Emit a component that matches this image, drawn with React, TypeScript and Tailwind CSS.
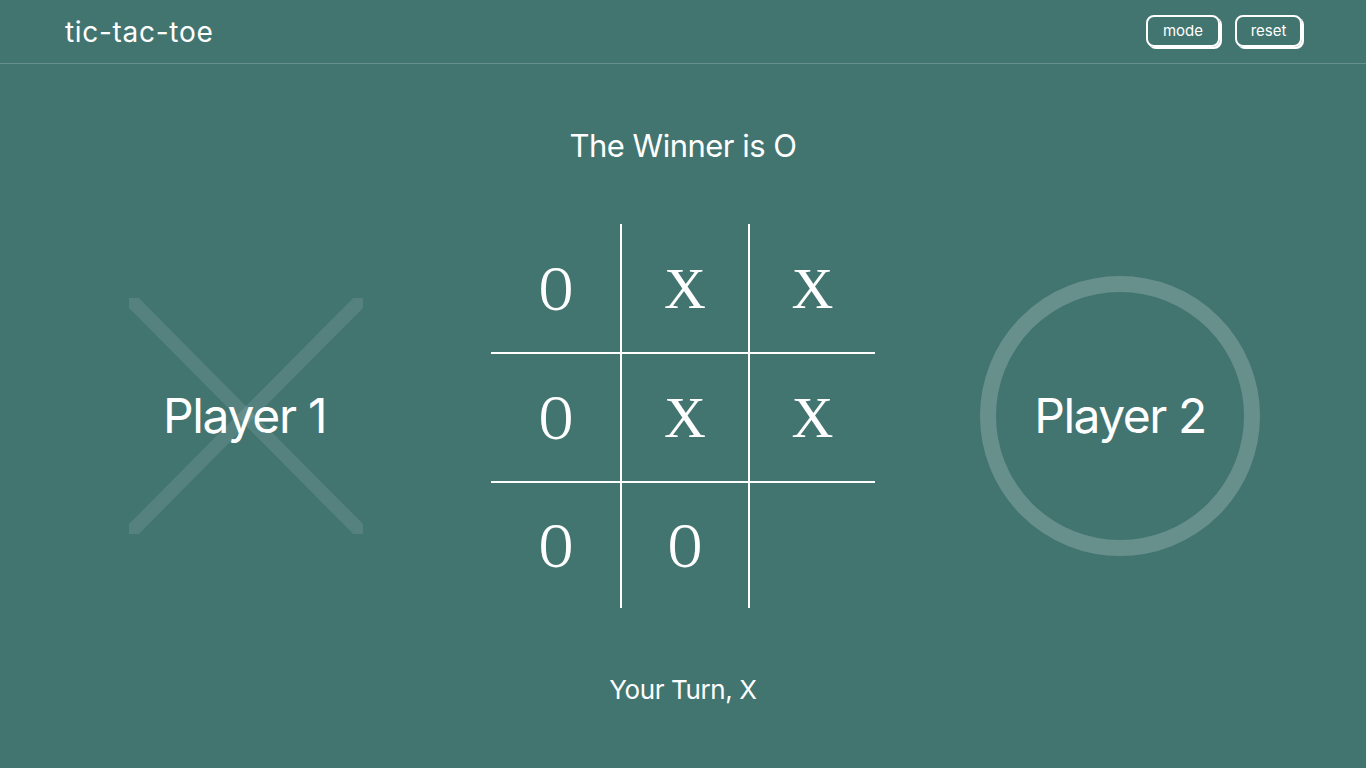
import React from "react";

const board = ["O", "X", "X", "O", "X", "X", "O", "O", ""];

export default function App() {
  return (
    <div
      className="min-h-screen w-full bg-[#427470] text-white"
      style={{ fontFamily: "Inter, 'Noto Sans', sans-serif" }}
    >
      <header className="flex h-[64px] items-center justify-between border-b border-white/20 pl-[65px] pr-[64px]">
        <div className="text-[28px] tracking-[0.7px]">tic-tac-toe</div>
        <div className="flex gap-[15px] pb-[1px]">
          <button className="h-[32px] w-[74px] rounded-[8px] border-2 border-white pt-[1px] text-[15px] shadow-[2px_2px_0_0_#fff]">
            mode
          </button>
          <button className="h-[32px] w-[67px] rounded-[8px] border-2 border-white pt-[1px] text-[15px] shadow-[2px_2px_0_0_#fff]">
            reset
          </button>
        </div>
      </header>

      <main className="flex flex-col items-center">
        <div className="mt-[62px] h-[40px] text-[31px] leading-[40px] tracking-[-0.5px]">
          The Winner is O
        </div>

        <div className="mt-[58px] flex w-full items-center justify-between px-[106px]">
          <div className="relative flex h-[280px] w-[280px] items-center justify-center">
            <svg
              className="absolute left-[23px] top-[22px]"
              width="234"
              height="236"
              viewBox="0 0 234 236"
            >
              <line x1="0" y1="0" x2="234" y2="236" stroke="rgba(255,255,255,0.1)" strokeWidth="14" />
              <line x1="234" y1="0" x2="0" y2="236" stroke="rgba(255,255,255,0.1)" strokeWidth="14" />
            </svg>
            <span className="relative mr-[3px] text-[48px] tracking-[-1.3px]">Player 1</span>
          </div>

          <div className="grid grid-cols-[131px_128px_125px] grid-rows-[130px_129px_125px]">
            {board.map((v, i) => {
              const col = i % 3;
              const row = Math.floor(i / 3);
              return (
                <div
                  key={i}
                  className={`flex items-center justify-center border-white text-[58px] ${
                    col < 2 ? "border-r-2" : ""
                  } ${row < 2 ? "border-b-2" : ""}`}
                  style={{ fontFamily: "'Liberation Serif', 'Times New Roman', serif" }}
                >
                  <span
                    className={
                      v === "O"
                        ? "inline-block scale-x-[0.8] scale-y-[1.08]"
                        : "inline-block"
                    }
                  >
                    {v}
                  </span>
                </div>
              );
            })}
          </div>

          <div className="relative flex h-[280px] w-[280px] items-center justify-center">
            <svg className="absolute left-0 top-0" width="280" height="280" viewBox="0 0 280 280">
              <circle cx="140" cy="140" r="132" fill="none" stroke="rgba(255,255,255,0.2)" strokeWidth="16" />
            </svg>
            <span className="relative text-[48px] tracking-[-1.5px]">Player 2</span>
          </div>
        </div>

        <div className="mt-[66px] text-[26px] leading-[32px] tracking-[-0.4px]">Your Turn, X</div>
      </main>
    </div>
  );
}
